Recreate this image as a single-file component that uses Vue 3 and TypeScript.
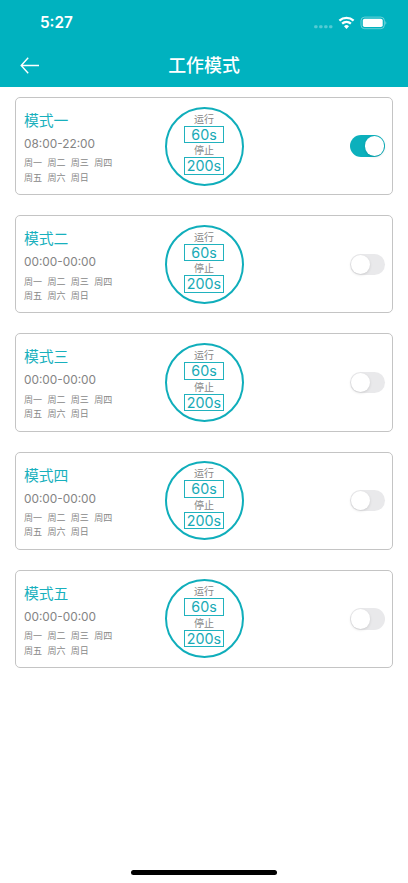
<script setup lang="ts">
import { ref } from 'vue'

interface Mode {
  name: string
  time: string
  run: string
  stop: string
  on: boolean
}

const weekRows: string[][] = [
  ['周一', '周二', '周三', '周四'],
  ['周五', '周六', '周日'],
]

const modes = ref<Mode[]>([
  { name: '模式一', time: '08:00-22:00', run: '60s', stop: '200s', on: true },
  { name: '模式二', time: '00:00-00:00', run: '60s', stop: '200s', on: false },
  { name: '模式三', time: '00:00-00:00', run: '60s', stop: '200s', on: false },
  { name: '模式四', time: '00:00-00:00', run: '60s', stop: '200s', on: false },
  { name: '模式五', time: '00:00-00:00', run: '60s', stop: '200s', on: false },
])
</script>

<template>
  <div class="screen">
    <header class="header">
      <div class="status">
        <span class="clock">5:27</span>
        <svg class="status-icons" width="74" height="16" viewBox="0 0 74 16">
          <g fill="#fff" opacity="0.33">
            <rect x="1.2" y="10.3" width="3.3" height="3" rx="1" />
            <rect x="6.2" y="10.3" width="3.3" height="3" rx="1" />
            <rect x="11.2" y="10.3" width="3.3" height="3" rx="1" />
            <rect x="16.1" y="10.3" width="3.3" height="3" rx="1" />
          </g>
          <g fill="none" stroke="#fff" stroke-width="2.3">
            <path d="M26.4 5.6 A10.6 10.6 0 0 1 40.6 5.6" />
            <path d="M29.1 8.7 A6.6 6.6 0 0 1 37.9 8.7" />
          </g>
          <path d="M33.5 13.9 L31 11.3 A3.6 3.6 0 0 1 36 11.3 Z" fill="#fff" />
          <rect x="48" y="2.1" width="23.4" height="11.6" rx="3.6" fill="none" stroke="#fff" stroke-opacity="0.4" />
          <rect x="49.8" y="3.8" width="19.9" height="8.2" rx="1.8" fill="#fff" />
          <path d="M72.4 6 Q74.2 7.9 72.4 9.8 Z" fill="#fff" opacity="0.45" />
        </svg>
      </div>
      <div class="nav">
        <svg class="back" width="20" height="18" viewBox="0 0 20 18" fill="none" stroke="#fff" stroke-width="1.4">
          <path d="M8.2 0.8 L1.2 8.5 L8.2 16.2 M1.2 8.5 H19" />
        </svg>
        <h1 class="title">工作模式</h1>
      </div>
    </header>

    <main class="list">
      <section v-for="mode in modes" :key="mode.name" class="card">
        <div class="info">
          <div class="name">{{ mode.name }}</div>
          <div class="time">{{ mode.time }}</div>
          <div v-for="(row, i) in weekRows" :key="i" class="days">
            <span v-for="day in row" :key="day">{{ day }}</span>
          </div>
        </div>
        <div class="dial">
          <span class="label">运行</span>
          <span class="value">{{ mode.run }}</span>
          <span class="label">停止</span>
          <span class="value">{{ mode.stop }}</span>
        </div>
        <button
          class="switch"
          :class="{ on: mode.on }"
          role="switch"
          :aria-checked="mode.on"
          @click="mode.on = !mode.on"
        >
          <i class="knob"></i>
        </button>
      </section>
    </main>

    <footer class="home"><div class="home-bar"></div></footer>
  </div>
</template>

<style>
body {
  background: #fff;
}
</style>

<style scoped>
.screen {
  display: flex;
  flex-direction: column;
  height: 883px;
  overflow: hidden;
  font-family: Inter, 'Noto Sans CJK SC', sans-serif;
  background: #fff;
}
.header {
  height: 87px;
  flex: none;
  background: #00b2bf;
  color: #fff;
}
.status {
  display: flex;
  justify-content: space-between;
  align-items: center;
  height: 44px;
  padding: 1px 21px 0 40px;
  box-sizing: border-box;
}
.clock {
  font-size: 15.3px;
  font-weight: 600;
  line-height: 20px;
}
.nav {
  display: grid;
  grid-template-columns: 60px 1fr 60px;
  align-items: center;
  height: 43px;
}
.back {
  margin-left: 20px;
}
.title {
  margin: 0;
  text-align: center;
  font-size: 17.9px;
  font-weight: 500;
  line-height: 24px;
}
.list {
  display: flex;
  flex-direction: column;
  gap: 19.9px;
  padding: 10px 15px 0;
}
.card {
  display: grid;
  grid-template-columns: 1fr 79px 1fr;
  align-items: center;
  height: 98.3px;
  box-sizing: border-box;
  border: 1px solid #c4c4c4;
  border-radius: 5px;
  padding: 0 7px 0 8px;
}
.info {
  padding-top: 3px;
  white-space: nowrap;
}
.name {
  font-size: 14.8px;
  line-height: 22px;
  color: #18b0bd;
}
.time {
  margin-top: 2px;
  font-size: 11.85px;
  line-height: 20px;
  color: #848484;
}
.days {
  display: flex;
  gap: 5.4px;
  font-size: 9px;
  line-height: 14.4px;
  color: #888;
}
.time + .days {
  margin-top: 2.4px;
}
.dial {
  display: flex;
  flex-direction: column;
  align-items: center;
  width: 79px;
  height: 79px;
  margin-left: -0.5px;
  box-sizing: border-box;
  border: 2px solid #10aebb;
  border-radius: 50%;
  padding-top: 2.9px;
}
.label {
  font-size: 10px;
  line-height: 14px;
  color: #868686;
}
.value {
  width: 39.5px;
  height: 17.6px;
  box-sizing: border-box;
  border: 1px solid #20b2be;
  font-size: 14.3px;
  line-height: 16.5px;
  text-align: center;
  color: #18aab6;
}
.switch {
  justify-self: end;
  display: flex;
  width: 35px;
  height: 21.5px;
  box-sizing: border-box;
  padding: 1.1px;
  border: 0;
  border-radius: 11px;
  background: #e9e9eb;
}
.switch.on {
  justify-content: flex-end;
  background: #0cb0bc;
}
.knob {
  width: 19.3px;
  height: 19.3px;
  border-radius: 50%;
  background: #fff;
  box-shadow: 0 1px 3px rgba(0, 0, 0, 0.13);
}
.home {
  display: flex;
  justify-content: center;
  margin-top: auto;
  padding-bottom: 8px;
}
.home-bar {
  width: 146px;
  height: 5px;
  border-radius: 3px;
  background: #000;
}
</style>
